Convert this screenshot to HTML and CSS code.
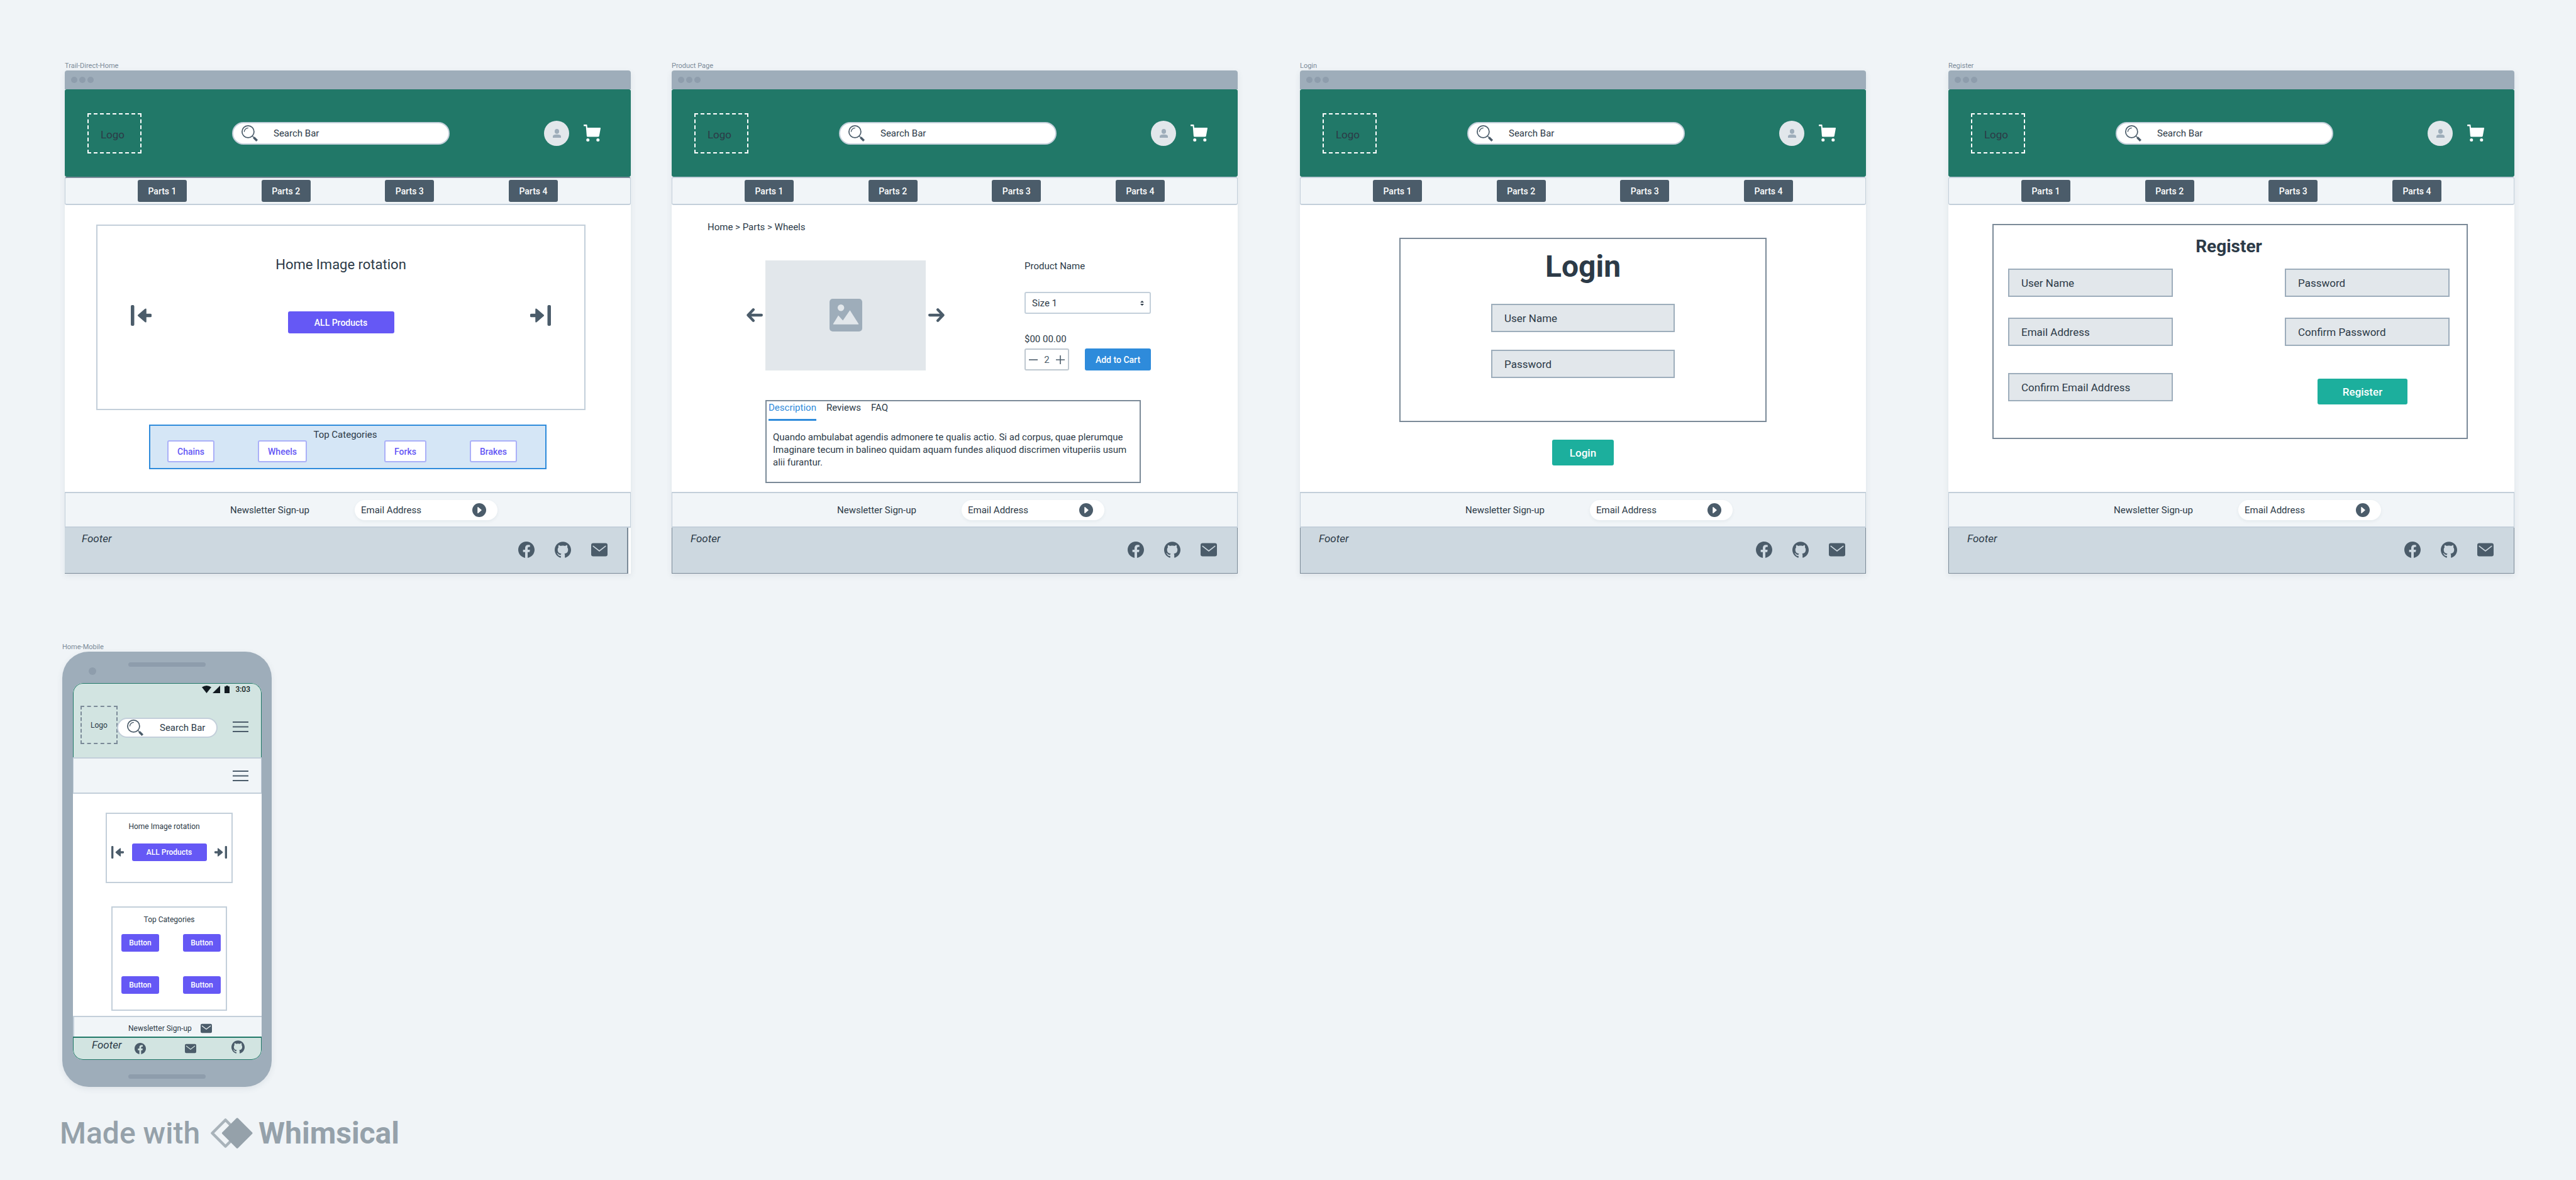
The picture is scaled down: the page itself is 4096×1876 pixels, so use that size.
FILE: index.html
```html
<!DOCTYPE html>
<html lang="en">
<head>
<meta charset="utf-8">
<title>Trail Direct wireframes</title>
<link rel="stylesheet" href="styles.css">
</head>
<body>
<svg class="sprite" aria-hidden="true">
  <symbol id="i-search" viewBox="0 0 30 30"><g fill="none" stroke="currentColor"><circle cx="12" cy="12" r="11" stroke-width="2"/><path d="M5 12.500a7.500 7.500 0 0 1 7.500-7.500" stroke-width="1.500"/><path d="M20 20l3 3" stroke-width="1.500"/><path d="M22.500 22.500l6 6" stroke-width="4.200"/></g></symbol>
  <symbol id="i-cart" viewBox="0 0 32 32"><path fill="currentColor" d="M0 1q0-1 1-1h4.500q1 0 1 1l.5 5h24q1.200 0 1 1.200l-2.600 14q-.4 1.800-2 1.800H7.500Q6 23 5.800 21.200L4.300 3H1Q0 3 0 2zM8 26a3 3 0 1 0 0 6 3 3 0 0 0 0-6zM27 26a3 3 0 1 0 0 6 3 3 0 0 0 0-6z"/></symbol>
  <symbol id="i-user" viewBox="0 0 15 16"><path fill="currentColor" d="M7.500 0a4 4.300 0 0 1 0 8.800 4 4.300 0 0 1 0-8.800zM0 16v-2.500Q0 10 7.500 10T15 13.500V16z"/></symbol>
  <symbol id="i-skip-back" viewBox="0 0 24 24"><rect width="4" height="24" rx="1.500" fill="currentColor"/><path fill="currentColor" d="M8.300 11.200l8-6.800q1.700-1.200 1.700.6v5h4.500q1.500 0 1.500 1v2q0 1-1.500 1H18v5q0 1.800-1.700.6l-8-6.800q-.7-.8 0-1.600z"/></symbol>
  <symbol id="i-skip-next" viewBox="0 0 24 24"><g transform="matrix(-1 0 0 1 24 0)"><rect width="4" height="24" rx="1.500" fill="currentColor"/><path fill="currentColor" d="M8.300 11.200l8-6.800q1.700-1.200 1.700.6v5h4.500q1.500 0 1.500 1v2q0 1-1.500 1H18v5q0 1.800-1.700.6l-8-6.800q-.7-.8 0-1.600z"/></g></symbol>
  <symbol id="i-left" viewBox="0 0 24 24"><path d="M22 12H3M10 4l-7.700 8L10 20" fill="none" stroke="currentColor" stroke-width="4" stroke-linecap="round" stroke-linejoin="round"/></symbol>
  <symbol id="i-right" viewBox="0 0 24 24"><path d="M2 12h19M14 4l7.700 8-7.700 8" fill="none" stroke="currentColor" stroke-width="4" stroke-linecap="round" stroke-linejoin="round"/></symbol>
  <symbol id="i-image" viewBox="0 0 62 62"><rect width="62" height="62" rx="6" fill="#9eadba"/><circle cx="21.600" cy="17" r="6.200" fill="#e2e7eb"/><path d="M7 47.500l9.700-15.800 8.600 9.300 13.400-19.300L55 47.500v1.200H7z" fill="#e2e7eb"/></symbol>
  <symbol id="i-play" viewBox="0 0 22 22"><circle cx="11" cy="11" r="11" fill="currentColor"/><path d="M9 6.800l5 4.200-5 4.200z" fill="#fff" stroke="#fff" stroke-width="1.500" stroke-linejoin="round"/></symbol>
  <symbol id="i-facebook" viewBox="0 0 24 24"><path fill="currentColor" d="M24 12.073c0-6.627-5.373-12-12-12s-12 5.373-12 12c0 5.990 4.388 10.954 10.125 11.854v-8.385H7.078v-3.470h3.047V9.430c0-3.007 1.792-4.669 4.533-4.669 1.312 0 2.686.235 2.686.235v2.953H15.830c-1.491 0-1.956.925-1.956 1.874v2.250h3.328l-.532 3.470h-2.796v8.385C19.612 23.027 24 18.062 24 12.073z"/></symbol>
  <symbol id="i-github" viewBox="0 0 24 24"><path fill="currentColor" d="M12 .297c-6.630 0-12 5.373-12 12 0 5.303 3.438 9.800 8.205 11.385.6.113.82-.258.82-.577 0-.285-.01-1.040-.015-2.040-3.338.724-4.042-1.610-4.042-1.610C4.422 18.070 3.633 17.700 3.633 17.700c-1.087-.744.084-.729.084-.729 1.205.084 1.838 1.236 1.838 1.236 1.070 1.835 2.809 1.305 3.495.998.108-.776.417-1.305.76-1.605-2.665-.3-5.466-1.332-5.466-5.930 0-1.310.465-2.380 1.235-3.220-.135-.303-.54-1.523.105-3.176 0 0 1.005-.322 3.300 1.230.96-.267 1.980-.399 3-.405 1.020.006 2.040.138 3 .405 2.280-1.552 3.285-1.230 3.285-1.230.645 1.653.24 2.873.12 3.176.765.840 1.230 1.910 1.230 3.220 0 4.610-2.805 5.625-5.475 5.920.42.360.81 1.096.81 2.220 0 1.606-.015 2.896-.015 3.286 0 .315.21.690.825.570C20.565 22.092 24 17.592 24 12.297c0-6.627-5.373-12-12-12"/></symbol>
  <symbol id="i-mail" viewBox="0 0 32 32"><rect y="3" width="32" height="26" rx="4" fill="currentColor"/><path d="M4 9l12 9.300L28 9" fill="none" stroke="var(--hole)" stroke-width="2" stroke-linecap="round"/></symbol>
  <symbol id="i-minus" viewBox="0 0 14 14"><path d="M0 7h14" stroke="currentColor" stroke-width="1.600"/></symbol>
  <symbol id="i-plus" viewBox="0 0 14 14"><path d="M0 7h14M7 0v14" stroke="currentColor" stroke-width="1.600"/></symbol>
  <symbol id="i-menu" viewBox="0 0 25 17"><path d="M0 1h25M0 8.500h25M0 16h25" stroke="currentColor" stroke-width="1.800"/></symbol>
</svg>

<div class="board">
  <div class="frames">
    <section class="frame">
      <h2 class="caption">Trail-Direct-Home</h2>
      <div class="window">
        <div class="chrome"><i></i><i></i><i></i></div>
        <header class="header">
          <div class="logo">Logo</div>
          <form class="search"><svg class="ic-search"><use href="#i-search"/></svg><input type="search" aria-label="Search" placeholder="Search Bar"></form>
          <div class="actions"><a class="avatar" href="#" aria-label="Account"><svg><use href="#i-user"/></svg></a><a class="cart" href="#" aria-label="Cart"><svg><use href="#i-cart"/></svg></a></div>
        </header>
        <nav class="nav nav-dark"><button>Parts 1</button><button>Parts 2</button><button>Parts 3</button><button>Parts 4</button></nav>
        <main class="main">
          <div class="hero">
            <h3>Home Image rotation</h3>
            <div class="hero-row">
              <button class="icon-btn skip" aria-label="Previous"><svg><use href="#i-skip-back"/></svg></button>
              <button class="all">ALL Products</button>
              <button class="icon-btn skip" aria-label="Next"><svg><use href="#i-skip-next"/></svg></button>
            </div>
          </div>
          <div class="cats">
            <h3>Top Categories</h3>
            <div class="cats-row">
              <div><button>Chains</button><button>Wheels</button></div>
              <div><button>Forks</button><button>Brakes</button></div>
            </div>
          </div>
        </main>
        <form class="news"><label for="n1">Newsletter Sign-up</label><div class="pill"><input id="n1" type="email" placeholder="Email Address"><button type="button" aria-label="Subscribe"><svg><use href="#i-play"/></svg></button></div></form>
        <footer class="footer footer-short"><em>Footer</em><div class="social"><a href="#" aria-label="Facebook"><svg><use href="#i-facebook"/></svg></a><a href="#" aria-label="GitHub"><svg><use href="#i-github"/></svg></a><a href="#" aria-label="Email"><svg><use href="#i-mail"/></svg></a></div></footer>
      </div>
    </section>

    <section class="frame">
      <h2 class="caption">Product Page</h2>
      <div class="window">
        <div class="chrome"><i></i><i></i><i></i></div>
        <header class="header">
          <div class="logo">Logo</div>
          <form class="search"><svg class="ic-search"><use href="#i-search"/></svg><input type="search" aria-label="Search" placeholder="Search Bar"></form>
          <div class="actions"><a class="avatar" href="#" aria-label="Account"><svg><use href="#i-user"/></svg></a><a class="cart" href="#" aria-label="Cart"><svg><use href="#i-cart"/></svg></a></div>
        </header>
        <nav class="nav"><button>Parts 1</button><button>Parts 2</button><button>Parts 3</button><button>Parts 4</button></nav>
        <main class="main">
          <nav class="crumbs"><a href="#">Home</a> &gt; <a href="#">Parts</a> &gt; <a href="#">Wheels</a></nav>
          <div class="product">
            <div class="gallery">
              <button class="icon-btn arrow" aria-label="Previous image"><svg><use href="#i-left"/></svg></button>
              <div class="photo"><svg><use href="#i-image"/></svg></div>
              <button class="icon-btn arrow" aria-label="Next image"><svg><use href="#i-right"/></svg></button>
            </div>
            <div class="info">
              <p>Product Name</p>
              <div class="select"><select aria-label="Size"><option>Size 1</option></select><svg viewBox="0 0 6 8"><path d="M0 3l3-3 3 3zM0 5l3 3 3-3z" fill="currentColor"/></svg></div>
              <p class="price">$00 00.00</p>
              <div class="buy">
                <div class="stepper"><button aria-label="Decrease"><svg><use href="#i-minus"/></svg></button><input type="text" aria-label="Quantity" value="2"><button aria-label="Increase"><svg><use href="#i-plus"/></svg></button></div>
                <button class="add">Add to Cart</button>
              </div>
            </div>
          </div>
          <div class="details">
            <div class="tabs" role="tablist"><button role="tab" aria-selected="true">Description</button><button role="tab" aria-selected="false">Reviews</button><button role="tab" aria-selected="false">FAQ</button></div>
            <p>Quando ambulabat agendis admonere te qualis actio. Si ad corpus, quae plerumque<br>Imaginare tecum in balineo quidam aquam fundes aliquod discrimen vituperiis usum<br>alii furantur.</p>
          </div>
        </main>
        <form class="news"><label for="n2">Newsletter Sign-up</label><div class="pill"><input id="n2" type="email" placeholder="Email Address"><button type="button" aria-label="Subscribe"><svg><use href="#i-play"/></svg></button></div></form>
        <footer class="footer"><em>Footer</em><div class="social"><a href="#" aria-label="Facebook"><svg><use href="#i-facebook"/></svg></a><a href="#" aria-label="GitHub"><svg><use href="#i-github"/></svg></a><a href="#" aria-label="Email"><svg><use href="#i-mail"/></svg></a></div></footer>
      </div>
    </section>

    <section class="frame">
      <h2 class="caption">Login</h2>
      <div class="window">
        <div class="chrome"><i></i><i></i><i></i></div>
        <header class="header">
          <div class="logo">Logo</div>
          <form class="search"><svg class="ic-search"><use href="#i-search"/></svg><input type="search" aria-label="Search" placeholder="Search Bar"></form>
          <div class="actions"><a class="avatar" href="#" aria-label="Account"><svg><use href="#i-user"/></svg></a><a class="cart" href="#" aria-label="Cart"><svg><use href="#i-cart"/></svg></a></div>
        </header>
        <nav class="nav"><button>Parts 1</button><button>Parts 2</button><button>Parts 3</button><button>Parts 4</button></nav>
        <main class="main">
          <form class="login">
            <div class="login-box">
              <h1>Login</h1>
              <input class="field" type="text" aria-label="User Name" placeholder="User Name">
              <input class="field" type="password" aria-label="Password" placeholder="Password">
            </div>
            <button class="submit" type="button">Login</button>
          </form>
        </main>
        <form class="news"><label for="n3">Newsletter Sign-up</label><div class="pill"><input id="n3" type="email" placeholder="Email Address"><button type="button" aria-label="Subscribe"><svg><use href="#i-play"/></svg></button></div></form>
        <footer class="footer"><em>Footer</em><div class="social"><a href="#" aria-label="Facebook"><svg><use href="#i-facebook"/></svg></a><a href="#" aria-label="GitHub"><svg><use href="#i-github"/></svg></a><a href="#" aria-label="Email"><svg><use href="#i-mail"/></svg></a></div></footer>
      </div>
    </section>

    <section class="frame">
      <h2 class="caption">Register</h2>
      <div class="window">
        <div class="chrome"><i></i><i></i><i></i></div>
        <header class="header">
          <div class="logo">Logo</div>
          <form class="search"><svg class="ic-search"><use href="#i-search"/></svg><input type="search" aria-label="Search" placeholder="Search Bar"></form>
          <div class="actions"><a class="avatar" href="#" aria-label="Account"><svg><use href="#i-user"/></svg></a><a class="cart" href="#" aria-label="Cart"><svg><use href="#i-cart"/></svg></a></div>
        </header>
        <nav class="nav"><button>Parts 1</button><button>Parts 2</button><button>Parts 3</button><button>Parts 4</button></nav>
        <main class="main">
          <form class="register">
            <h1>Register</h1>
            <div class="register-cols">
              <div class="col">
                <input class="field" type="text" aria-label="User Name" placeholder="User Name">
                <input class="field" type="email" aria-label="Email Address" placeholder="Email Address">
                <input class="field last" type="email" aria-label="Confirm Email Address" placeholder="Confirm Email Address">
              </div>
              <div class="col">
                <input class="field" type="password" aria-label="Password" placeholder="Password">
                <input class="field" type="password" aria-label="Confirm Password" placeholder="Confirm Password">
                <button class="submit" type="button">Register</button>
              </div>
            </div>
          </form>
        </main>
        <form class="news"><label for="n4">Newsletter Sign-up</label><div class="pill"><input id="n4" type="email" placeholder="Email Address"><button type="button" aria-label="Subscribe"><svg><use href="#i-play"/></svg></button></div></form>
        <footer class="footer"><em>Footer</em><div class="social"><a href="#" aria-label="Facebook"><svg><use href="#i-facebook"/></svg></a><a href="#" aria-label="GitHub"><svg><use href="#i-github"/></svg></a><a href="#" aria-label="Email"><svg><use href="#i-mail"/></svg></a></div></footer>
      </div>
    </section>
  </div>

  <section class="mobile">
    <h2 class="caption">Home-Mobile</h2>
    <div class="phone">
      <div class="bezel-top"><i class="camera"></i><i class="speaker"></i></div>
      <div class="screen">
        <header class="m-header">
          <div class="status">
            <svg width="15" height="12" viewBox="0 0 15 12"><path d="M0 2.500Q7.500-2.500 15 2.500L7.500 12z"/></svg>
            <svg width="12" height="12" viewBox="0 0 12 12"><path d="M0 12L12 0v12z"/></svg>
            <svg class="battery" width="8" height="12" viewBox="0 0 8 12"><path d="M0 1.200h2.500V0h3v1.200H8V12H0z"/></svg>
            <time>3:03</time>
          </div>
          <div class="m-bar">
            <div class="m-logo">Logo</div>
            <form class="m-search"><svg class="ic-search"><use href="#i-search"/></svg><input type="search" aria-label="Search" placeholder="Search Bar"></form>
            <button class="icon-btn menu" aria-label="Menu"><svg><use href="#i-menu"/></svg></button>
          </div>
        </header>
        <nav class="m-nav"><button class="icon-btn menu" aria-label="Parts menu"><svg><use href="#i-menu"/></svg></button></nav>
        <main class="m-main">
          <div class="m-hero">
            <h3>Home Image rotation</h3>
            <div class="m-hero-row">
              <button class="icon-btn m-skip" aria-label="Previous"><svg><use href="#i-skip-back"/></svg></button>
              <button class="m-btn">ALL Products</button>
              <button class="icon-btn m-skip" aria-label="Next"><svg><use href="#i-skip-next"/></svg></button>
            </div>
          </div>
          <div class="m-cats">
            <h3>Top Categories</h3>
            <div class="m-grid"><button class="m-btn">Button</button><button class="m-btn">Button</button><button class="m-btn">Button</button><button class="m-btn">Button</button></div>
          </div>
        </main>
        <div class="m-news"><span>Newsletter Sign-up</span><a href="#" aria-label="Sign up by email"><svg><use href="#i-mail"/></svg></a></div>
        <footer class="m-footer"><em>Footer</em><a href="#" aria-label="Facebook"><svg><use href="#i-facebook"/></svg></a><a href="#" aria-label="Email"><svg><use href="#i-mail"/></svg></a><a class="gh" href="#" aria-label="GitHub"><svg><use href="#i-github"/></svg></a></footer>
      </div>
      <div class="bezel-bottom"><i class="speaker"></i></div>
    </div>
  </section>

  <div class="brand">
    <span>Made with</span>
    <svg viewBox="0 0 68 49"><path d="M24.500 3.500L3.500 24.500l21 21 21-21z" fill="none" stroke="#a9b3ba" stroke-width="4.500" stroke-linejoin="round"/><path d="M43.200 2L20.700 24.500l22.500 22.500 22.500-22.500z" fill="#95a1aa" stroke="#95a1aa" stroke-width="3.500" stroke-linejoin="round"/></svg>
    <b>Whimsical</b>
  </div>
</div>
</body>
</html>
```
FILE: styles.css
```css
:root {
  --ink: #2c3a47;
  --slate: #4b5c6a;
  --line: #c3cfda;
  --steel: #7b8a98;
  --shell: #9eadba;
  --shell-dark: #8e9dac;
  --board: #f0f4f7;
  --green: #217868;
  --violet: #6558f5;
  --blue: #2e8bdb;
  --teal: #1caf9d;
  --field: #e2e7eb;
  --hole: #cdd8e0;
}

* { box-sizing: border-box; }

body {
  margin: 0;
  background: var(--board);
  color: var(--ink);
  font: 400 15px/16px Roboto, "Liberation Sans", sans-serif;
}

h1, h2, h3, p { margin: 0; font-weight: 400; }
svg { display: block; }
a { color: inherit; text-decoration: none; }
button { border: 0; padding: 0; color: inherit; font: inherit; font-size: 14px; font-weight: 500; background: none; cursor: pointer; }
input, select { border: 0; padding: 0; margin: 0; color: inherit; font: inherit; background: none; min-width: 0; outline: 0; }
input::placeholder { color: inherit; opacity: 1; }
.sprite { position: absolute; width: 0; height: 0; }

.board { padding-top: 97px; }

.frames {
  display: grid;
  grid-template-columns: 900fr 65fr 900fr 99fr 900fr 131fr 900fr;
  padding: 0 98px 0 103px;
}
.frame { display: flex; flex-direction: column; }
.frame:nth-child(2) { grid-column: 3; }
.frame:nth-child(3) { grid-column: 5; }
.frame:nth-child(4) { grid-column: 7; }

.caption { font-size: 11px; line-height: 15px; color: var(--steel); }

.window {
  flex: 1;
  display: flex;
  flex-direction: column;
  background: #fff;
  border-radius: 4px 4px 0 0;
  box-shadow: 0 3px 10px rgba(60, 80, 100, .1);
}
.chrome { display: flex; align-items: center; gap: 3px; height: 30px; padding-left: 10px; background: var(--shell); border-radius: 4px 4px 0 0; }
.chrome i { width: 10px; height: 10px; border-radius: 50%; background: var(--shell-dark); }

.header { display: flex; align-items: center; height: 139px; padding: 0 48px 0 36px; background: var(--green); border-radius: 3px; }
.logo { display: flex; align-items: center; justify-content: center; width: 86px; height: 64px; margin-right: 144px; padding: 4px 6px 0 0; border: 2px dashed #fff; font-size: 17px; }
.search { display: flex; align-items: center; gap: 25px; width: 346px; height: 36px; padding: 0 13px; border: 2px solid var(--line); border-radius: 18px; background: #fff; }
.search input { flex: 1; }
.ic-search { flex: none; width: 26px; height: 26px; color: var(--slate); }
.actions { display: flex; align-items: center; gap: 23px; margin-left: auto; }
.avatar { display: flex; align-items: center; justify-content: center; width: 40px; height: 40px; border-radius: 50%; background: var(--field); color: var(--shell); }
.avatar svg { width: 13px; height: 14px; }
.cart { color: #fff; }
.cart svg { width: 27px; height: 27px; }

.nav { display: flex; justify-content: space-between; padding: 3px 115px; border: 2px solid var(--line); border-width: 2px 1px; border-radius: 3px; background: #f1f5f8; }
.nav-dark { border-top-color: var(--steel); }
.nav button { width: 78px; height: 35px; border-radius: 3px; background: var(--slate); color: #fff; }

.main { flex: 1; display: flow-root; min-height: 456px; }

.icon-btn { color: var(--slate); }

.hero { margin: 31px 72px 0 50px; padding: 48px 53px 120px; border: 2px solid var(--line); }
.hero h3 { font-size: 22px; line-height: 28px; text-align: center; }
.hero-row { display: flex; justify-content: space-between; margin-top: 50px; }
.skip { align-self: flex-start; }
.skip svg { width: 33px; height: 33px; }
.all { width: 169px; height: 35px; margin-top: 10px; border-radius: 3px; background: var(--violet); color: #fff; }

.cats { margin: 23px 134px 0; padding: 6px 27px 9px; border: 2px solid var(--blue); background: #d5e6f6; }
.cats h3 { padding-right: 8px; font-size: 15px; text-align: center; }
.cats-row { display: flex; gap: 123px; margin-top: 1px; }
.cats-row div { display: flex; gap: 69px; }
.cats-row button { height: 35px; padding: 0 14px; border: 2px solid #abb0f8; border-radius: 3px; background: #fff; color: var(--violet); }

.news { display: flex; align-items: center; height: 57px; padding-left: 262px; border: 2px solid var(--line); border-width: 2px 1px; background: #f1f5f8; }
.news label { width: 198px; }
.pill { display: flex; align-items: center; width: 227px; height: 32px; padding: 0 18px 0 10px; border-radius: 16px; background: #fff; box-shadow: 0 2px 5px rgba(60, 80, 100, .07); }
.pill input { flex: 1; }
.pill button { color: var(--slate); }
.pill svg { width: 22px; height: 22px; }

.footer { display: flex; justify-content: space-between; height: 73px; padding: 7px 32px 0 29px; border: 1px solid var(--steel); border-top: 0; background: #cdd8e0; }
.footer-short { margin-right: 4px; padding: 7px 31px 0 27px; border-width: 0 2px 1px 0; }
.footer em { font-size: 17px; line-height: 20px; }
.social { display: flex; gap: 32px; padding-top: 15px; color: var(--slate); }
.social svg { width: 26px; height: 26px; }

.crumbs { padding: 27px 57px 0; }
.product { display: flex; margin: 44px 0 0 119px; }
.gallery { display: flex; align-items: center; gap: 4px; }
.arrow svg { width: 26px; height: 26px; }
.photo { display: flex; align-items: center; justify-content: center; width: 255px; height: 175px; background: var(--field); }
.photo svg { width: 52px; height: 52px; }
.info { width: 201px; margin-left: 127px; }
.info p { line-height: 20px; }
.select { position: relative; display: flex; height: 35px; margin-top: 31px; border: 2px solid var(--line); border-radius: 3px; }
.select select { flex: 1; appearance: none; padding-left: 10px; }
.select svg { position: absolute; right: 9px; top: 12px; width: 6px; height: 8px; pointer-events: none; }
.info .price { margin-top: 30px; }
.buy { display: flex; justify-content: space-between; margin-top: 5px; }
.stepper { display: flex; align-items: center; width: 71px; height: 35px; padding: 0 5px; border: 2px solid #bfc8d0; border-radius: 3px; color: var(--slate); }
.stepper input { flex: 1; text-align: center; }
.stepper svg { width: 14px; height: 14px; }
.add { width: 105px; height: 35px; border-radius: 3px; background: var(--blue); color: #fff; }

.details { width: 597px; margin: 47px 0 0 149px; padding-bottom: 21px; border: 2px solid var(--steel); }
.tabs { display: flex; gap: 16px; padding: 2px 3px 0; }
.tabs button { padding-bottom: 10px; border-bottom: 3px solid transparent; font-size: 15px; font-weight: 400; }
.tabs [aria-selected="true"] { color: var(--blue); border-color: var(--blue); }
.details p { padding: 16px 10px 0; line-height: 20px; }

.field { height: 45px; padding: 0 19px; border: 2px solid #9dadbb; background: var(--field); font-size: 17px; }
.submit { height: 41px; border-radius: 3px; background: var(--teal); color: #fff; font-size: 17px; }

.login { display: flex; flex-direction: column; align-items: center; padding-top: 52px; }
.login-box { display: flex; flex-direction: column; align-items: center; width: 584px; padding: 16px 0 68px; border: 2px solid var(--steel); }
.login h1 { margin-bottom: 31px; font-size: 48px; line-height: 56px; font-weight: 700; }
.login .field { width: 292px; }
.login .field + .field { margin-top: 28px; }
.login .submit { width: 98px; margin-top: 28px; }

.register { margin: 30px 74px 0 70px; padding: 18px 27px 53px 23px; border: 2px solid var(--steel); }
.register h1 { font-size: 28px; line-height: 32px; font-weight: 700; text-align: center; }
.register-cols { display: flex; justify-content: space-between; margin-top: 19px; }
.col { display: flex; flex-direction: column; gap: 33px; width: 262px; }
.register .last { margin-top: 10px; }
.register .submit { width: 143px; margin: 19px 0 0 52px; }

.mobile { width: 333px; margin: 109px 0 0 99px; }
.phone { border-radius: 42px; background: var(--shell); box-shadow: 0 3px 10px rgba(60, 80, 100, .1); }
.bezel-top { display: flex; height: 50px; padding-left: 42px; }
.camera { width: 12px; height: 12px; margin: 25px 51px 0 0; border-radius: 50%; background: var(--shell-dark); }
.speaker { width: 123px; height: 7px; margin-top: 17px; border-radius: 4px; background: var(--shell-dark); }
.bezel-bottom { display: flex; justify-content: center; height: 43px; padding-top: 6px; }
.screen { margin: 0 16px 0 17px; border-radius: 16px; background: #fff; overflow: hidden; }

.m-header { height: 118px; border: 1px solid var(--green); border-bottom: 0; border-radius: 16px 16px 0 0; background: #d2e4e1; }
.status { display: flex; align-items: center; justify-content: flex-end; gap: 2px; height: 18px; padding-right: 17px; font-size: 12px; font-weight: 500; color: #111a20; fill: currentColor; }
.battery { margin: 0 7px 0 5px; }
.m-bar { display: flex; align-items: flex-start; padding: 17px 0 0 11px; }
.m-logo { display: flex; align-items: center; justify-content: center; width: 59px; height: 61px; border: 2px dashed var(--steel); font-size: 12px; }
.m-search { display: flex; align-items: center; gap: 26px; width: 160px; height: 32px; margin: 19px 24px 0 -1px; padding-left: 14px; border: 2px solid var(--line); border-radius: 16px; background: #fff; }
.m-search input { flex: 1; }
.menu svg { width: 25px; height: 17px; }
.m-bar .menu { margin-top: 25px; }
.m-nav { display: flex; align-items: center; justify-content: flex-end; height: 58px; padding-right: 20px; border: 2px solid var(--line); border-width: 2px 1px; background: #f1f5f8; }

.m-main h3 { font-size: 12px; text-align: center; }
.m-btn { height: 28px; border-radius: 3px; background: var(--violet); color: #fff; font-size: 12px; }
.m-hero { width: 202px; margin: 30px 0 0 52px; padding: 12px 7px 33px; border: 2px solid var(--line); }
.m-hero h3 { padding-right: 16px; }
.m-hero-row { display: flex; align-items: center; justify-content: space-between; margin-top: 19px; }
.m-hero-row .m-btn { width: 119px; }
.m-skip svg { width: 20px; height: 20px; }
.m-cats { width: 184px; margin: 37px 0 8px 61px; padding: 11px 8px 25px 14px; border: 2px solid var(--line); }
.m-cats h3 { padding-right: 6px; }
.m-grid { display: grid; grid-template-columns: 60px 60px; justify-content: space-between; gap: 39px 0; margin-top: 15px; }

.m-news { --hole: #f1f5f8; display: flex; align-items: center; gap: 11px; height: 33px; padding: 4px 0 0 86px; border-top: 2px solid var(--line); border-left: 2px solid var(--line); background: #f1f5f8; font-size: 12px; }
.m-news span { width: 104px; white-space: nowrap; }
.m-news svg { width: 18px; height: 18px; color: var(--slate); }
.m-footer { --hole: #d2e4e1; display: flex; align-items: flex-start; height: 37px; padding: 0 0 0 29px; border: 1px solid var(--green); border-top-width: 2px; border-radius: 0 0 16px 16px; background: #d2e4e1; color: var(--slate); }
.m-footer em { width: 68px; padding-top: 1px; font-size: 17px; line-height: 20px; color: var(--ink); }
.m-footer a { padding-top: 8px; margin-right: 62px; }
.m-footer a + a { margin-right: 56px; }
.m-footer .gh { padding-top: 4px; margin-right: 0; }
.m-footer svg { width: 18px; height: 18px; }
.m-footer .gh svg { width: 21px; height: 21px; }

.brand { display: flex; align-items: center; height: 49px; margin: 49px 0 0 95px; color: #95a1aa; font-size: 48px; line-height: 48px; font-weight: 500; }
.brand svg { width: 68px; height: 49px; margin: 0 9px 0 16px; }
```
